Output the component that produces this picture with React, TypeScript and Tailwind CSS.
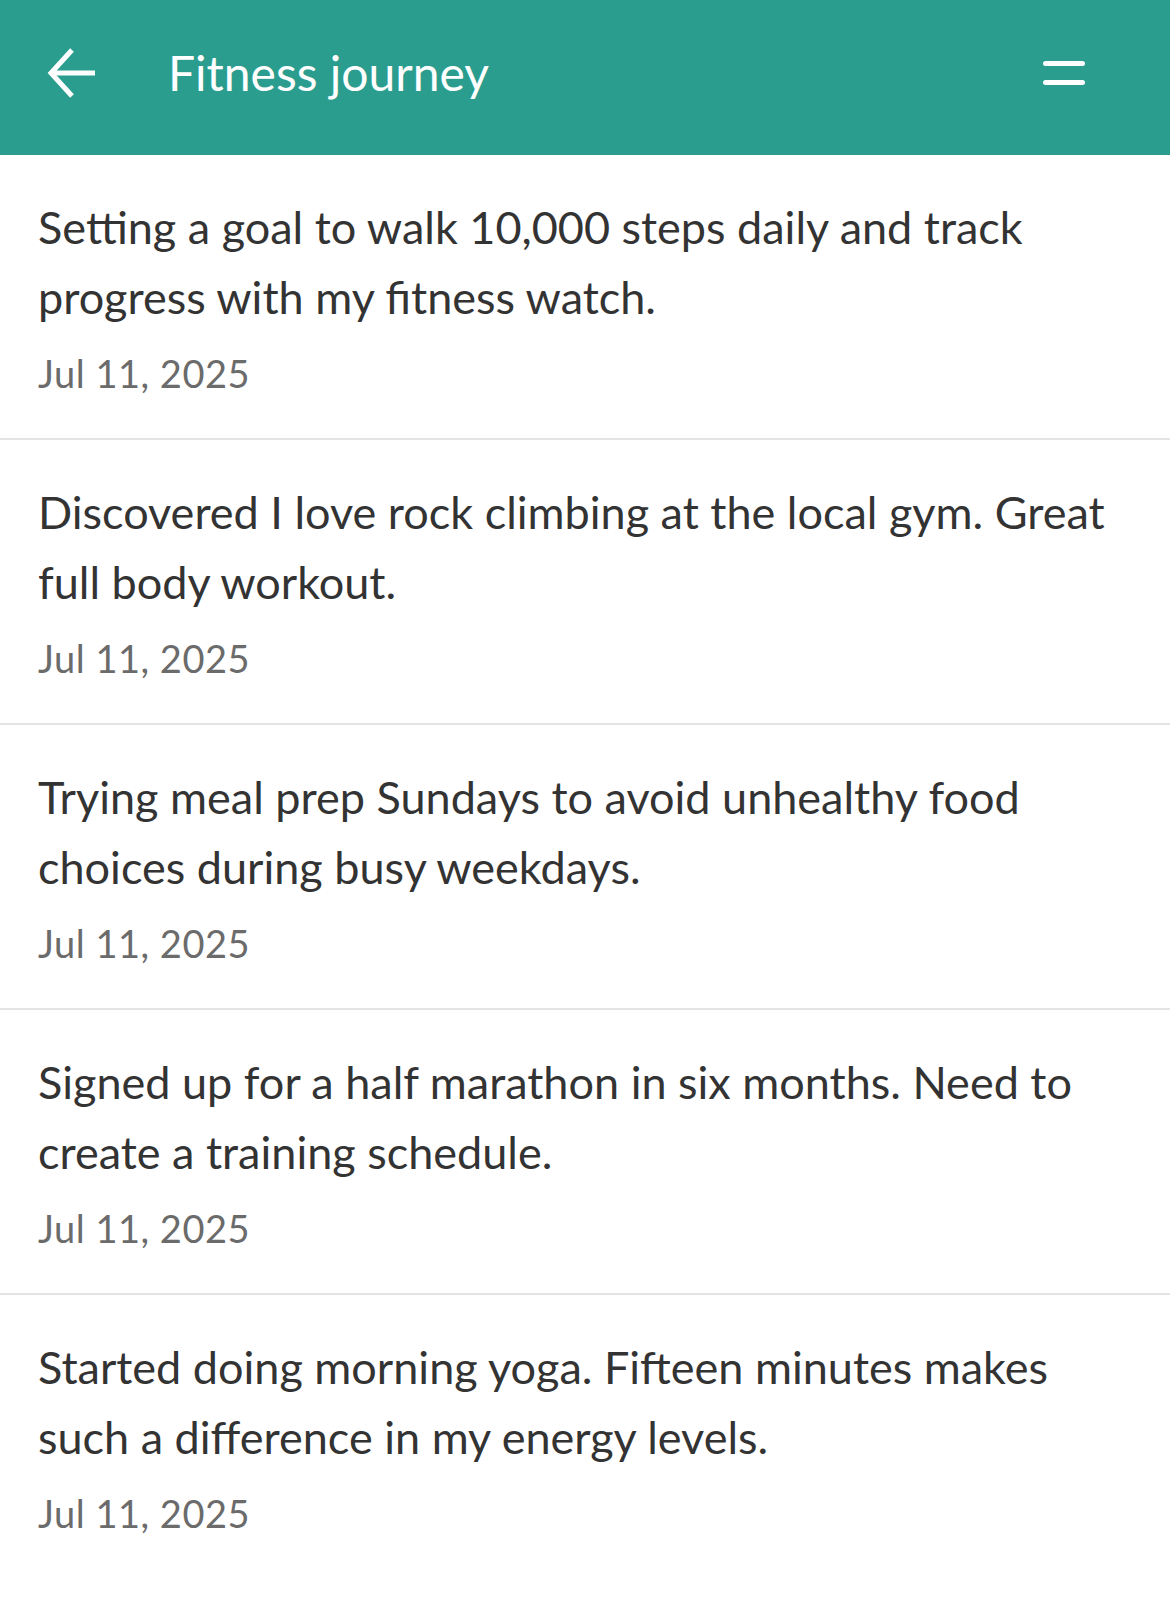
import React from "react";

const entries: string[][] = [
  ["Setting a goal to walk 10,000 steps daily and track", "progress with my fitness watch."],
  ["Discovered I love rock climbing at the local gym. Great", "full body workout."],
  ["Trying meal prep Sundays to avoid unhealthy food", "choices during busy weekdays."],
  ["Signed up for a half marathon in six months. Need to", "create a training schedule."],
  ["Started doing morning yoga. Fifteen minutes makes", "such a difference in my energy levels."],
];

export default function App() {
  return (
    <div className="w-[1170px] min-h-[1606px] bg-white" style={{ fontFamily: "Lato, 'Noto Sans', sans-serif" }}>
      <header className="h-[155px] bg-[#2a9d8f] flex items-center pb-[9px]">
        <div className="ml-[46px] w-[52px] h-[52px] flex items-center justify-center">
          <svg width="50" height="50" viewBox="0 0 50 50" fill="none" stroke="white" strokeWidth="5" strokeLinecap="butt" strokeLinejoin="miter">
            <path d="M48 25H4" />
            <path d="M25 2L4 25L25 48" />
          </svg>
        </div>
        <h1 className="ml-[70px] text-white text-[48px] leading-none">Fitness journey</h1>
        <div className="ml-auto mr-[85px] flex flex-col gap-[14px]">
          <span className="block w-[42px] h-[5px] rounded-full bg-white" />
          <span className="block w-[42px] h-[5px] rounded-full bg-white" />
        </div>
      </header>
      <main>
        {entries.map((t, i) => (
          <div key={i} className="border-b-2 last:border-b-0 border-[#e4e4e4] pl-[38px] pr-[30px] pt-[37px] pb-[40px]">
            <p className="text-[45px] leading-[70px] text-[#333333] whitespace-nowrap">
              {t[0]}
              <br />
              {t[1]}
            </p>
            <p className="mt-[16px] text-[38px] leading-[50px] tracking-[0.5px] text-[#6b6b6b]">Jul 11, 2025</p>
          </div>
        ))}
      </main>
    </div>
  );
}
